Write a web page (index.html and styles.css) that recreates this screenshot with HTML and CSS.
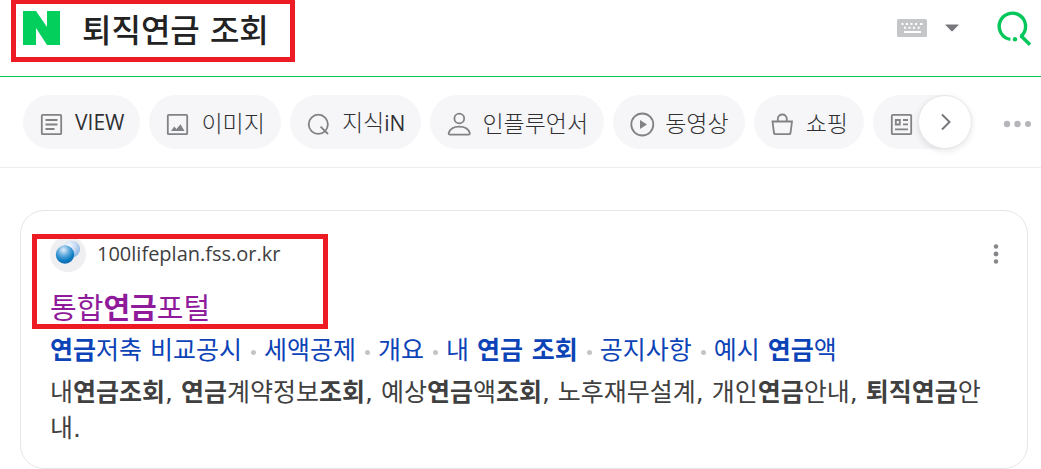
FILE: index.html
```html
<!DOCTYPE html>
<html lang="ko">
<head>
<meta charset="utf-8">
<meta name="viewport" content="width=device-width, initial-scale=1">
<title>퇴직연금 조회</title>
<link rel="stylesheet" href="styles.css">
</head>
<body>
<header class="search">
  <form class="search-form">
    <a class="logo" href="#" aria-label="홈">
      <svg width="37" height="34" viewBox="0 0 37 34"><path d="M0 0h13l11 16V0h13v34H24L13 17v17H0z" fill="#03cf5d"/></svg>
    </a>
    <input class="query" type="text" value="퇴직연금 조회" aria-label="검색어">
    <button class="icon-button keyboard" type="button" aria-label="입력기">
      <svg width="30" height="18" viewBox="0 0 30 18"><rect width="30" height="18" rx="1.5" fill="#c5c6c8"/><path d="M4.500 4h2v2h-2zM9 4h2v2H9zM13.500 4h2v2h-2zM18 4h2v2h-2zM23 4h2.500v2H23zM7 7.800h2v2H7zM11.500 7.800h2v2h-2zM16 7.800h2v2h-2zM20.700 7.800h2v2h-2zM7 12h17v2H7z" fill="#fff"/></svg>
    </button>
    <button class="icon-button arrow" type="button" aria-label="자동완성 펼치기">
      <svg width="14" height="8" viewBox="0 0 14 8"><path d="M1 .5h12q.8 0 .3.700L8 6.800q-1 1-2 0L.7 1.200Q.2.500 1 .5z" fill="#77787b"/></svg>
    </button>
    <button class="icon-button submit" type="submit" aria-label="검색">
      <svg width="36" height="36" viewBox="0 0 36 36" fill="none" stroke="#03c75a" stroke-width="3.400"><path d="M14.400 29.400A13.200 13.200 0 1 1 25.700 25.700L24.300 26"/><path d="M24.700 25.500l9.300 9.300"/><circle cx="19" cy="29.200" r="2.200" fill="#03c75a" stroke="none"/></svg>
    </button>
  </form>
</header>

<nav class="tabs" aria-label="검색 영역">
  <div class="chips">
    <a class="chip" href="#"><svg class="glyph" viewBox="0 0 24 24"><rect x="2.800" y="2.800" width="19.400" height="19.400" rx="1"/><path d="M6.500 8h12M6.500 12.500h12M6.500 17h9"/></svg><span class="latin">VIEW</span></a>
    <a class="chip" href="#"><svg class="glyph" viewBox="0 0 24 24"><rect x="2.800" y="2.800" width="19.400" height="19.400" rx="1"/><path class="solid" d="M6 19l3.200-4.500 2.300 2.500 4-4.800L19.500 19z"/></svg><span>이미지</span></a>
    <a class="chip" href="#"><svg class="glyph" viewBox="0 0 24 24"><circle cx="12.300" cy="12.300" r="9.600"/><path d="M14.600 14.600l7.400 7.400"/></svg><span>지식<span class="latin">iN</span></span></a>
    <a class="chip" href="#"><svg class="glyph" viewBox="0 0 24 24"><circle cx="13.300" cy="6.500" r="4.900"/><path d="M4 22.600h18.500q1.500 0 1.300-1.500C22.500 17 18.500 14.700 13.300 14.700S4 17 2.700 21.100q-.2 1.500 1.300 1.500z"/></svg><span>인플루언서</span></a>
    <a class="chip" href="#"><svg class="glyph" viewBox="0 0 24 24"><circle cx="13.300" cy="12.500" r="11"/><path class="solid" d="M11 8l7 4.500-7 4.500z"/></svg><span>동영상</span></a>
    <a class="chip" href="#"><svg class="glyph" viewBox="0 0 24 24"><path d="M2.500 9.500h19.500L20.500 21q-.2 1.200-1.200 1.200H5.200Q4.200 22.200 4 21zM7.800 9.500V7c0-6 9-6 9 0v2.500"/></svg><span>쇼핑</span></a>
    <a class="chip" href="#" aria-label="뉴스"><svg class="glyph" viewBox="0 0 24 24"><rect x="2.800" y="2.800" width="19.400" height="19.400" rx="1"/><path d="M6.800 8h4v4.500h-4zM14 8h5M14 12.300h5M6 17.300h13"/></svg></a>
  </div>
  <button class="next" type="button" aria-label="다음">
    <svg width="12" height="18" viewBox="0 0 12 18"><path d="M3 1.500L10.500 9 3 16.500" fill="none" stroke="#77787b" stroke-width="2"/></svg>
  </button>
  <button class="icon-button more" type="button" aria-label="더보기">
    <svg width="28" height="8" viewBox="0 0 28 8" fill="#b5b6ba"><circle cx="4" cy="4" r="3.200"/><circle cx="14.500" cy="4" r="3.200"/><circle cx="25" cy="4" r="3"/></svg>
  </button>
</nav>

<main class="results">
  <article class="card">
    <div class="source">
      <span class="favicon">
        <svg width="36" height="36" viewBox="0 0 36 36">
          <defs>
            <radialGradient id="near" cx=".42" cy=".25" r=".75"><stop offset="0" stop-color="#e5effb"/><stop offset=".45" stop-color="#55a5db"/><stop offset=".8" stop-color="#0879c0"/><stop offset="1" stop-color="#126bb5"/></radialGradient>
            <radialGradient id="far" cx=".35" cy=".3" r=".75"><stop offset="0" stop-color="#f5f8ff"/><stop offset=".5" stop-color="#cbdcf4"/><stop offset="1" stop-color="#88b2e3"/></radialGradient>
          </defs>
          <circle cx="21.500" cy="13" r="8.600" fill="url(#far)"/><circle cx="15" cy="18.500" r="9.200" fill="url(#near)"/>
        </svg>
      </span>
      <a class="domain" href="#">100lifeplan.fss.or.kr</a>
      <button class="icon-button menu" type="button" aria-label="메뉴">
        <svg width="6" height="20" viewBox="0 0 6 20" fill="#85868a"><circle cx="3" cy="2.500" r="2.200"/><circle cx="3" cy="10" r="2.400"/><circle cx="3" cy="17.500" r="2.200"/></svg>
      </button>
    </div>
    <h2 class="title"><a href="#">통합<b>연금</b>포털</a></h2>
    <ul class="sublinks">
      <li><a href="#"><b>연금</b>저축 비교공시</a></li>
      <li><a href="#">세액공제</a></li>
      <li><a href="#">개요</a></li>
      <li><a href="#">내 <b>연금 조회</b></a></li>
      <li><a href="#">공지사항</a></li>
      <li><a href="#">예시 <b>연금</b>액</a></li>
    </ul>
    <p class="summary">내<b>연금조회</b>, <b>연금</b>계약정보<b>조회</b>, 예상<b>연금</b>액<b>조회</b>, 노후재무설계, 개인<b>연금</b>안내, <b>퇴직연금</b>안내.</p>
  </article>
</main>

<div class="mark mark-query"></div>
<div class="mark mark-result"></div>
</body>
</html>
```

FILE: styles.css
```css
* { box-sizing: border-box; }

body {
  position: relative;
  margin: 0;
  background: #fff;
  color: #222;
  font-family: "DejaVu Sans", "Noto Sans CJK KR", sans-serif;
  font-size: 25px;
}

a { color: inherit; text-decoration: none; }
svg { display: block; }
button { font: inherit; cursor: pointer; }

.icon-button {
  flex: none;
  padding: 0;
  border: 0;
  background: none;
}

.search { border-bottom: 1px solid #03c75a; }

.search-form {
  display: flex;
  align-items: center;
  height: 76px;
  padding: 0 9px 20px 23px;
}

.query {
  flex: 1;
  min-width: 0;
  height: 48px;
  margin-left: 22px;
  padding: 0;
  border: 0;
  outline: 0;
  background: none;
  color: #222;
  font-family: "DejaVu Sans", "Noto Sans CJK KR", sans-serif;
  font-size: 32px;
  font-weight: 500;
}

.arrow { margin-left: 18px; }
.submit { margin-left: 37px; }

.tabs {
  display: flex;
  align-items: center;
  height: 91px;
  padding: 0 10px 0 23px;
  border-bottom: 1px solid #ececee;
}

.chips {
  display: flex;
  flex: 1;
  gap: 9px;
  min-width: 0;
  overflow: hidden;
}

.chip {
  display: flex;
  flex: none;
  align-items: center;
  gap: 12px;
  height: 54px;
  padding: 0 16px;
  border-radius: 27px;
  background: #f6f6f9;
  color: #303033;
  font-family: "Noto Sans CJK KR", sans-serif;
  font-size: 23px;
  font-weight: 300;
  line-height: 52px;
}

.chip:last-child { padding-right: 60px; }

.latin {
  font-family: "Open Sans", sans-serif;
  font-size: 21px;
  font-weight: 400;
}

.glyph {
  width: 24px;
  height: 24px;
  margin-top: 3px;
  overflow: visible;
  fill: none;
  stroke: #818285;
  stroke-width: 1.8;
}

.glyph .solid { fill: #818285; stroke: none; }

.next {
  display: flex;
  flex: none;
  align-items: center;
  justify-content: center;
  width: 54px;
  height: 54px;
  margin-left: -27px;
  padding: 0;
  border: 1px solid #e7e7ea;
  border-radius: 50%;
  background: #fff;
  box-shadow: 0 2px 6px rgba(0, 0, 0, .1);
  z-index: 1;
}

.more { margin-left: 31px; padding-top: 4px; }

.results { padding: 42px 13px 0 20px; }

.card {
  padding: 24px 28px 21px 29px;
  border: 1px solid #e6e6e8;
  border-radius: 24px;
}

.source { display: flex; align-items: center; height: 37px; }

.favicon {
  width: 36px;
  height: 36px;
  border-radius: 50%;
  background: #efeff2;
}

.domain {
  margin-left: 11px;
  color: #404040;
  font-family: "Open Sans", sans-serif;
  font-size: 20px;
}

.menu { margin-left: auto; }

.title {
  margin: 18px 0 5px;
  color: #8f1b9b;
  font-size: 29px;
  font-weight: 400;
  line-height: 38px;
}

.sublinks {
  display: flex;
  flex-wrap: wrap;
  margin: 0;
  padding: 0;
  color: #0c43b7;
  line-height: 36px;
  list-style: none;
}

.sublinks li { display: flex; align-items: center; }

.sublinks li + li::before {
  width: 5px;
  height: 5px;
  margin: 2px 8px 0 9px;
  border-radius: 50%;
  background: #c5c5c7;
  content: "";
}

.summary {
  margin: 6px 0 0;
  color: #404040;
  line-height: 36px;
  word-break: break-all;
}

.mark { position: absolute; border: 5px solid #ed1c24; pointer-events: none; }
.mark-query { top: -1px; left: 11px; width: 284px; height: 63px; }
.mark-result { top: 234px; left: 32px; width: 296px; height: 95px; }
```
